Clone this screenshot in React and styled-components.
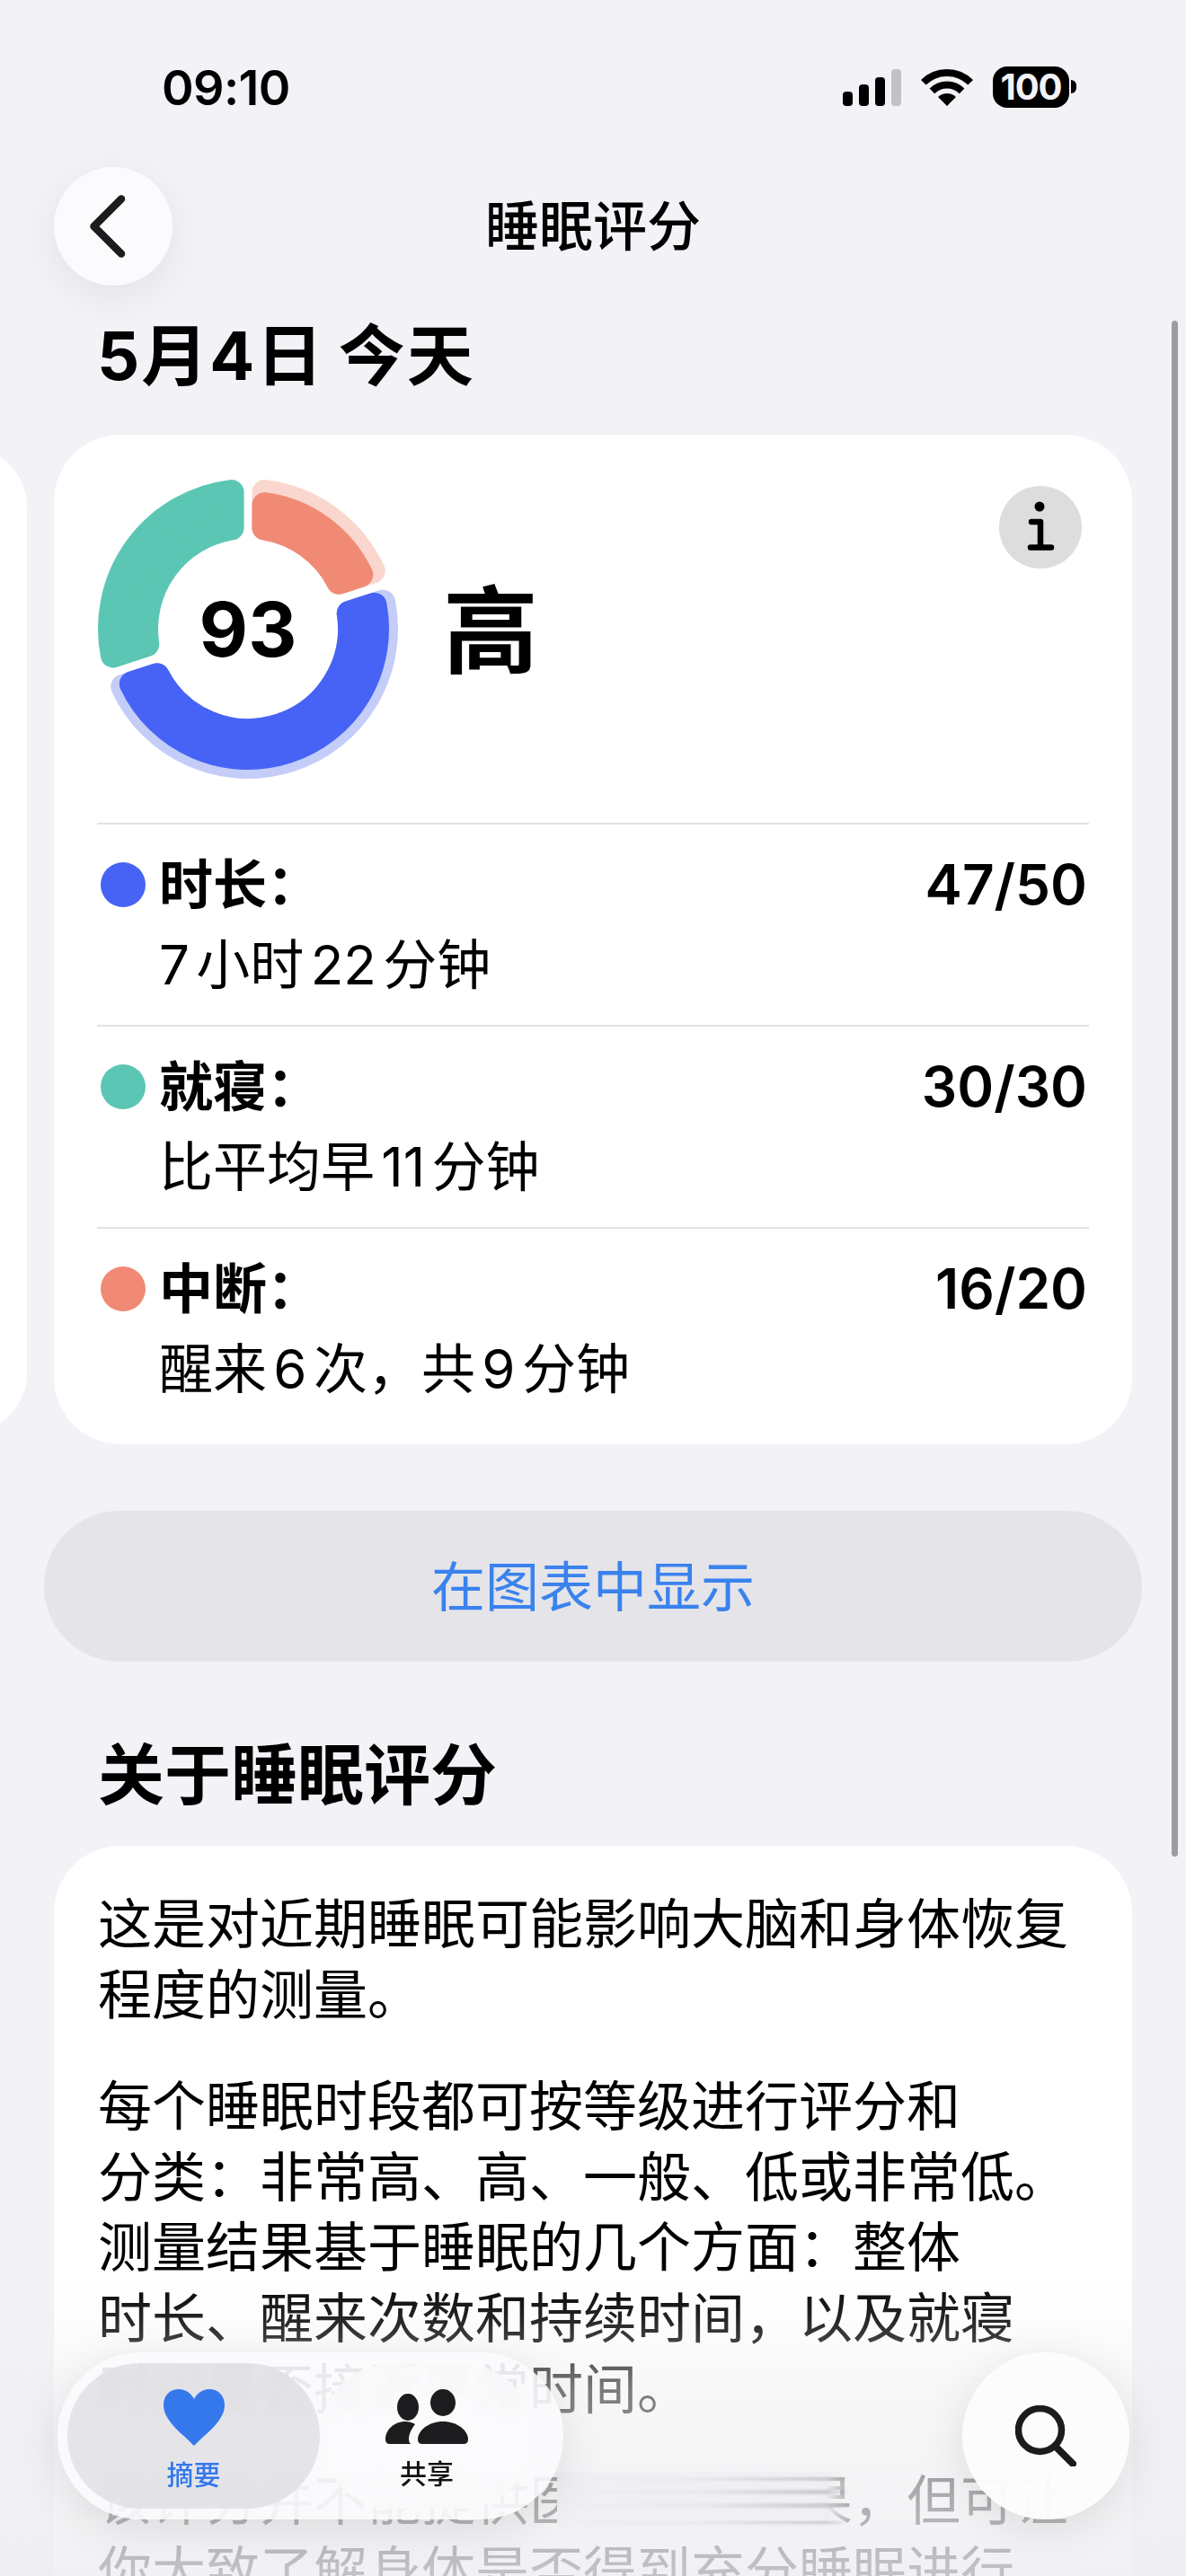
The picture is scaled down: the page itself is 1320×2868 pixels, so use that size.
import React from 'react'
import styled, { createGlobalStyle } from 'styled-components'

const GlobalStyle = createGlobalStyle`
  html, body { margin: 0; padding: 0; background: #f2f2f7; }
  body { font-family: Inter, "Noto Sans CJK SC", sans-serif; color: #000; }
`

const rows = [
  { color: '#4763f5', label: '时长：', value: '47/50', detail: '7 小时 22 分钟' },
  { color: '#5cc6b4', label: '就寝：', value: '30/30', detail: '比平均早 11 分钟' },
  { color: '#f08a75', label: '中断：', value: '16/20', detail: '醒来 6 次，共 9 分钟' },
]

const paragraphs = [
  ['这是对近期睡眠可能影响大脑和身体恢复', '程度的测量。'],
  [
    '每个睡眠时段都可按等级进行评分和',
    '分类：非常高、高、一般、低或非常低。',
    '测量结果基于睡眠的几个方面：整体',
    '时长、醒来次数和持续时间，以及就寝',
    '时间是否接近平常时间。',
  ],
  ['该评分并不能提供医学诊断结果，但可让', '你大致了解身体是否得到充分睡眠进行'],
]

const segments = [
  { from: 0, to: 72, outer: 153, color: '#f08a75', halo: '#f9d7cf' },
  { from: 72, to: 252, outer: 157, color: '#4763f5', halo: '#c4cdf8' },
  { from: 252, to: 360, outer: 167, color: '#5cc6b4' },
]

const RING_C = 180
const CORNER = 14
const GAP = 9
const INNER = 100

function point(r, deg) {
  const a = (deg * Math.PI) / 180
  return `${(RING_C + r * Math.sin(a)).toFixed(2)} ${(RING_C - r * Math.cos(a)).toFixed(2)}`
}

function sector(from, to, outer) {
  const r1 = INNER + CORNER
  const r2 = outer - CORNER
  const inset = r => (((CORNER + GAP / 2) / r) * 180) / Math.PI
  const large = to - from > 180 ? 1 : 0
  return [
    `M ${point(r2, from + inset(r2))}`,
    `A ${r2} ${r2} 0 ${large} 1 ${point(r2, to - inset(r2))}`,
    `L ${point(r1, to - inset(r1))}`,
    `A ${r1} ${r1} 0 ${large} 0 ${point(r1, from + inset(r1))}`,
    'Z',
  ].join(' ')
}

function Segment({ d, color }) {
  return <path d={d} fill={color} stroke={color} strokeWidth={CORNER * 2} strokeLinejoin="round" />
}

export default function App() {
  return (
    <Screen>
      <GlobalStyle />
      <StatusBar>
        <Clock>09:10</Clock>
        <StatusIcons>
          <Signal>
            <SignalBar $h={16} />
            <SignalBar $h={24} />
            <SignalBar $h={32} />
            <SignalBar $h={41} $off />
          </Signal>
          <svg width="58" height="42" viewBox="0 0 58 42">
            <path d="M2.8 15.8 A37 37 0 0 1 55.2 15.8" fill="none" stroke="#000" strokeWidth="8" />
            <path d="M12.4 25.4 A23.5 23.5 0 0 1 45.6 25.4" fill="none" stroke="#000" strokeWidth="8" />
            <path d="M29 42 L19.1 32.1 A14 14 0 0 1 38.9 32.1 Z" fill="#000" />
          </svg>
          <Battery>100</Battery>
        </StatusIcons>
      </StatusBar>

      <NavBar>
        <BackButton>
          <svg width="40" height="70" viewBox="0 0 40 70">
            <path d="M35 4.5 L4.5 35 L35 65.5" fill="none" stroke="#1c1c1e" strokeWidth="8.5" strokeLinecap="round" strokeLinejoin="round" />
          </svg>
        </BackButton>
        <NavTitle>睡眠评分</NavTitle>
      </NavBar>

      <DateTitle>5月4日 今天</DateTitle>

      <Carousel>
        <PeekCard />
        <ScoreCard>
          <ScoreHeader>
            <RingWrap>
              <svg width="360" height="360" viewBox="0 0 360 360">
                {segments.map(s => (
                  <g key={s.from}>
                    {s.halo && <Segment d={sector(s.from, s.to, 167)} color={s.halo} />}
                    <Segment d={sector(s.from, s.to, s.outer)} color={s.color} />
                  </g>
                ))}
              </svg>
              <ScoreNumber>93</ScoreNumber>
            </RingWrap>
            <ScoreLevel>高</ScoreLevel>
            <InfoButton>
              <svg width="92" height="92" viewBox="0 0 92 92">
                <circle cx="45" cy="23" r="5.5" fill="#000" />
                <path d="M36 40 H46 V68.5 M35 68.5 H58" fill="none" stroke="#000" strokeWidth="6.5" strokeLinecap="round" strokeLinejoin="round" />
              </svg>
            </InfoButton>
          </ScoreHeader>
          {rows.map(row => (
            <MetricRow key={row.label}>
              <MetricDot $color={row.color} />
              <MetricLabel>{row.label}</MetricLabel>
              <MetricValue>{row.value}</MetricValue>
              <MetricDetail>{row.detail}</MetricDetail>
            </MetricRow>
          ))}
        </ScoreCard>
      </Carousel>

      <ChartButton>在图表中显示</ChartButton>
      <SectionTitle>关于睡眠评分</SectionTitle>

      <AboutCard>
        {paragraphs.map((lines, i) => (
          <Paragraph key={i}>
            {lines.map(line => (
              <TextLine key={line}>{line}</TextLine>
            ))}
          </Paragraph>
        ))}
      </AboutCard>

      <Scrollbar />
      <BottomFade />
      <GlassSmear />

      <BottomBar>
        <TabBar>
          <Tab $active>
            <svg width="68" height="63" viewBox="0 0 68 63">
              <path d="M34 63 C24 52 0 36 0 18 C0 7 7 0 17 0 C25 0 31 5 34 11 C37 5 43 0 51 0 C61 0 68 7 68 18 C68 36 44 52 34 63 Z" fill="#3478ec" />
            </svg>
            <TabLabel $active>摘要</TabLabel>
          </Tab>
          <Tab>
            <svg width="93" height="62" viewBox="0 0 93 62">
              <ellipse cx="25" cy="20" rx="12" ry="15" fill="#1c1c1e" />
              <ellipse cx="64" cy="15" rx="14" ry="15" fill="#1c1c1e" />
              <path d="M36 56 C36 46 48 36 64 36 C80 36 92 46 92 56 Q92 61 87 61 H41 Q36 61 36 56 Z" fill="#1c1c1e" />
              <path d="M0 56 C0 45 10 36 22 36 C26 36 30 37 33 39 C29 44 26 50 26 56 Q26 59 28 61 H5 Q0 61 0 56 Z" fill="#1c1c1e" />
            </svg>
            <TabLabel>共享</TabLabel>
          </Tab>
        </TabBar>
        <SearchButton>
          <svg width="68" height="68" viewBox="0 0 68 68">
            <circle cx="27.5" cy="27.5" r="24" fill="none" stroke="#1c1c1e" strokeWidth="7.5" />
            <path d="M45 46 L64 65" fill="none" stroke="#1c1c1e" strokeWidth="8" strokeLinecap="round" />
          </svg>
        </SearchButton>
      </BottomBar>
    </Screen>
  )
}

const Screen = styled.div`
  position: relative;
  width: 1320px;
  height: 2868px;
  overflow: hidden;
  background: #f2f2f7;
`

const StatusBar = styled.div`
  box-sizing: border-box;
  height: 186px;
  padding: 8px 122px 0 180px;
  display: flex;
  align-items: center;
  justify-content: space-between;
`

const Clock = styled.div`
  font-size: 54px;
  font-weight: 600;
  letter-spacing: -0.6px;
`

const StatusIcons = styled.div`
  display: flex;
  align-items: center;
  gap: 22px;
`

const Signal = styled.div`
  display: flex;
  align-items: flex-end;
  gap: 7px;
  height: 41px;
`

const SignalBar = styled.span`
  width: 11px;
  height: ${p => p.$h}px;
  border-radius: 4px;
  background: ${p => (p.$off ? '#c2c2c6' : '#000')};
`

const Battery = styled.div`
  position: relative;
  width: 85px;
  height: 46px;
  margin-right: 8px;
  border-radius: 16px;
  background: #000;
  color: #f2f2f7;
  font-size: 40px;
  font-weight: 700;
  letter-spacing: -1px;
  line-height: 46px;
  text-align: center;

  &::after {
    content: '';
    position: absolute;
    right: -8px;
    top: 15px;
    width: 6px;
    height: 15px;
    border-radius: 0 8px 8px 0;
    background: #000;
  }
`

const NavBar = styled.div`
  height: 132px;
  padding: 0 60px;
  display: grid;
  grid-template-columns: 132px 1fr 132px;
  align-items: center;
`

const BackButton = styled.div`
  width: 132px;
  height: 132px;
  border-radius: 50%;
  background: #fbfbfd;
  box-shadow: 0 12px 48px rgba(0, 0, 0, 0.07);
  display: flex;
  align-items: center;
  justify-content: center;
  padding-right: 12px;
  box-sizing: border-box;
`

const NavTitle = styled.div`
  text-align: center;
  font-size: 60px;
  font-weight: 500;
  line-height: 132px;
`

const DateTitle = styled.h1`
  margin: 34px 0 44px;
  padding-left: 108px;
  font-size: 74px;
  font-weight: 700;
  letter-spacing: 2px;
  word-spacing: -4px;
  line-height: 88px;
`

const Carousel = styled.div`
  width: 1260px;
  display: flex;
  justify-content: flex-end;
  align-items: center;
  gap: 30px;
`

const PeekCard = styled.div`
  flex: 0 0 1200px;
  height: 1097px;
  border-radius: 66px;
  background: #fff;
`

const ScoreCard = styled.section`
  flex: 0 0 1200px;
  box-sizing: border-box;
  height: 1124px;
  padding: 0 48px;
  border-radius: 74px;
  background: #fff;
`

const ScoreHeader = styled.div`
  height: 432px;
  padding-top: 36px;
  box-sizing: border-box;
  display: flex;
  align-items: flex-start;
`

const RingWrap = styled.div`
  position: relative;
  width: 360px;
  height: 360px;
  margin-left: -12px;

  svg {
    display: block;
  }
`

const ScoreNumber = styled.div`
  position: absolute;
  inset: 0;
  display: flex;
  align-items: center;
  justify-content: center;
  font-size: 84px;
  font-weight: 700;
`

const ScoreLevel = styled.div`
  margin: 3px 0 0 37px;
  height: 360px;
  line-height: 360px;
  font-size: 106px;
  font-weight: 700;
`

const InfoButton = styled.div`
  width: 92px;
  height: 92px;
  margin: 21px 8px 0 auto;
  border-radius: 50%;
  background: #dddddd;

  svg {
    display: block;
  }
`

const MetricRow = styled.div`
  box-sizing: border-box;
  height: 225px;
  padding: 23px 2px 0 4px;
  border-top: 2px solid #e2e2e4;
  display: grid;
  grid-template-columns: 50px 1fr auto;
  grid-template-rows: 88px 90px;
  column-gap: 15px;
  align-items: center;

  &:last-child {
    height: 242px;
  }
`

const MetricDot = styled.span`
  width: 50px;
  height: 50px;
  border-radius: 50%;
  background: ${p => p.$color};
`

const MetricLabel = styled.div`
  font-size: 60px;
  font-weight: 700;
  line-height: 88px;
`

const MetricValue = styled.div`
  font-size: 62px;
  font-weight: 600;
  line-height: 88px;
`

const MetricDetail = styled.div`
  grid-column: 2 / 4;
  font-size: 60px;
  line-height: 88px;
  word-spacing: -9.5px;
`

const ChartButton = styled.div`
  margin: 74px 49px 0;
  height: 168px;
  padding-top: 2px;
  box-sizing: border-box;
  border-radius: 84px;
  background: #e4e4e9;
  color: #3a82ee;
  font-size: 60px;
  line-height: 166px;
  text-align: center;
`

const SectionTitle = styled.h2`
  margin: 82px 0 35px;
  padding-left: 109px;
  font-size: 74px;
  font-weight: 700;
  line-height: 88px;
`

const AboutCard = styled.section`
  margin: 0 60px;
  padding: 48px 49px 60px;
  border-radius: 74px;
  background: #fff;
`

const Paragraph = styled.div`
  margin-bottom: 46px;
  font-size: 60px;
  line-height: 78.6px;
`

const TextLine = styled.div`
  white-space: nowrap;
`

const Scrollbar = styled.div`
  position: absolute;
  right: 9px;
  top: 357px;
  width: 7px;
  height: 1710px;
  border-radius: 4px;
  background: #9c9ca1;
`

const BottomFade = styled.div`
  position: absolute;
  left: 0;
  right: 0;
  bottom: 0;
  height: 338px;
  background: linear-gradient(
    to bottom,
    rgba(240, 240, 243, 0) 0%,
    rgba(240, 240, 243, 0.15) 15%,
    rgba(240, 240, 243, 0.5) 38%,
    rgba(240, 240, 243, 0.72) 74%,
    rgba(238, 238, 242, 0.82) 100%
  );
`

/* the liquid-glass edge smears the line of text sideways */
const GlassSmear = styled.div`
  position: absolute;
  left: 620px;
  top: 2752px;
  width: 325px;
  height: 62px;
  background: #f0f0f3;
  mask-image: linear-gradient(to right, #000 0%, #000 92%, transparent 100%);

  &::before {
    content: '';
    position: absolute;
    inset: 0;
    background:
      linear-gradient(rgba(185, 185, 190, 0.8), rgba(185, 185, 190, 0.8)) 0 6px / 100% 4px no-repeat,
      linear-gradient(rgba(185, 185, 190, 0.8), rgba(185, 185, 190, 0.8)) 0 20px / 100% 5px no-repeat,
      linear-gradient(rgba(185, 185, 190, 0.8), rgba(185, 185, 190, 0.8)) 0 35px / 100% 5px no-repeat,
      linear-gradient(rgba(185, 185, 190, 0.8), rgba(185, 185, 190, 0.8)) 0 55px / 100% 3px no-repeat;
    mask-image: linear-gradient(to right, transparent 0%, rgba(0, 0, 0, 0.15) 50%, #000 100%);
    filter: blur(0.8px);
  }
`

const BottomBar = styled.div`
  position: absolute;
  left: 64px;
  right: 63px;
  top: 2619px;
  display: flex;
  justify-content: space-between;
`

const TabBar = styled.nav`
  box-sizing: border-box;
  width: 563px;
  height: 186px;
  padding: 12px 33px 12px 11px;
  border-radius: 93px;
  background: rgba(251, 251, 253, 0.88);
  box-shadow: 0 10px 50px rgba(0, 0, 0, 0.1);
  display: flex;
`

const Tab = styled.div`
  box-sizing: border-box;
  width: ${p => (p.$active ? 281 : 238)}px;
  height: 162px;
  padding-top: 29px;
  border-radius: 81px;
  display: flex;
  flex-direction: column;
  align-items: center;
  background: ${p => (p.$active ? 'rgba(208, 208, 214, 0.5)' : 'rgba(251, 251, 253, 0.55)')};
  backdrop-filter: ${p => (p.$active ? 'blur(6px)' : 'blur(4px)')};

  svg {
    display: block;
  }
`

const TabLabel = styled.div`
  margin-top: 14px;
  font-size: 30px;
  font-weight: 500;
  line-height: 36px;
  color: ${p => (p.$active ? '#3478ec' : '#111')};
`

const SearchButton = styled.div`
  width: 186px;
  height: 186px;
  border-radius: 50%;
  background: rgba(252, 252, 253, 0.97);
  box-shadow: 0 10px 50px rgba(0, 0, 0, 0.1);
  display: flex;
  align-items: center;
  justify-content: center;
`
